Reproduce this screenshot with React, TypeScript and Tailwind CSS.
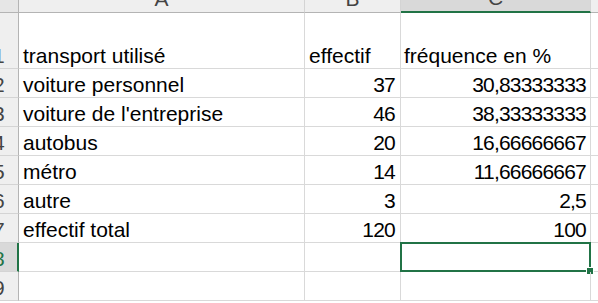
import React from "react";

const FONT = '"Liberation Sans", Arial, sans-serif';

type Row = { n: number; h: string; a: string; b: string; c: string };

const rows: Row[] = [
  { n: 1, h: "h-[56px]", a: "transport utilisé", b: "effectif", c: "fréquence en %" },
  { n: 2, h: "h-[29px]", a: "voiture personnel", b: "37", c: "30,83333333" },
  { n: 3, h: "h-[29px]", a: "voiture de l'entreprise", b: "46", c: "38,33333333" },
  { n: 4, h: "h-[29px]", a: "autobus", b: "20", c: "16,66666667" },
  { n: 5, h: "h-[29px]", a: "métro", b: "14", c: "11,66666667" },
  { n: 6, h: "h-[29px]", a: "autre", b: "3", c: "2,5" },
  { n: 7, h: "h-[29px]", a: "effectif total", b: "120", c: "100" },
  { n: 8, h: "h-[29px]", a: "", b: "", c: "" },
  { n: 9, h: "h-[29px]", a: "", b: "", c: "" },
];

const isNum = (s: string) => /^[0-9,]+$/.test(s);

export default function App() {
  return (
    <div
      className="w-[598px] h-[303px] overflow-hidden bg-white text-[21px] leading-none text-black"
      style={{ fontFamily: FONT }}
    >
      <div className="grid grid-cols-[19px_286px_96px_190px_1fr]">
        {/* header row */}
        <div className="h-[13px] bg-[#e6e6e6] border-r border-b border-[#b4b4b4]" />
        {["A", "B", "C"].map((l) => (
          <div
            key={l}
            className={
              "h-[13px] flex items-end justify-center overflow-hidden pb-[3px] border-r text-[#444444] " +
              (l === "C"
                ? "bg-[#d9d9d9] border-b-2 border-b-[#217346] border-r-[#d4d4d4]"
                : "bg-[#efefef] border-b border-b-[#b4b4b4] border-r-[#d4d4d4]")
            }
          >
            <span>{l}</span>
          </div>
        ))}
        <div className="h-[13px] bg-[#efefef] border-b border-[#b4b4b4]" />

        {rows.map((r) => {
          const sel = r.n === 8;
          return (
            <React.Fragment key={r.n}>
              <div
                className={
                  r.h +
                  " flex items-end overflow-hidden pb-[2px] border-b border-b-[#d4d4d4] " +
                  (sel
                    ? "bg-[#d9d9d9] border-r-2 border-r-[#217346] text-[#217346]"
                    : "bg-[#efefef] border-r border-r-[#b4b4b4] text-[#444444]")
                }
              >
                <span className="-ml-[7px]">{r.n}</span>
              </div>
              <div
                className={
                  r.h +
                  " flex items-end overflow-hidden whitespace-nowrap pl-[4px] pb-[2px] border-r border-b border-[#d9d9d9]"
                }
              >
                <span>{r.a}</span>
              </div>
              <div
                className={
                  r.h +
                  " flex items-end overflow-hidden whitespace-nowrap pb-[2px] border-r border-b border-[#d9d9d9] " +
                  (isNum(r.b) ? "justify-end pr-[5px] tracking-[-0.8px]" : "pl-[4px]")
                }
              >
                <span>{r.b}</span>
              </div>
              <div
                className={
                  r.h +
                  " relative flex items-end whitespace-nowrap pb-[2px] border-r border-b border-[#d9d9d9] " +
                  (isNum(r.c) ? "justify-end pr-[4px] tracking-[-0.8px]" : "pl-[3px]")
                }
              >
                <span>{r.c}</span>
                {sel && (
                  <div className="absolute -left-[1px] -top-[1px] -right-[1px] -bottom-[1px] border-2 border-[#217346]">
                    <div className="absolute -right-[5px] -bottom-[5px] w-[8px] h-[8px] bg-[#217346] border border-white" />
                  </div>
                )}
              </div>
              <div className={r.h + " border-b border-[#d9d9d9]"} />
            </React.Fragment>
          );
        })}
      </div>
    </div>
  );
}
